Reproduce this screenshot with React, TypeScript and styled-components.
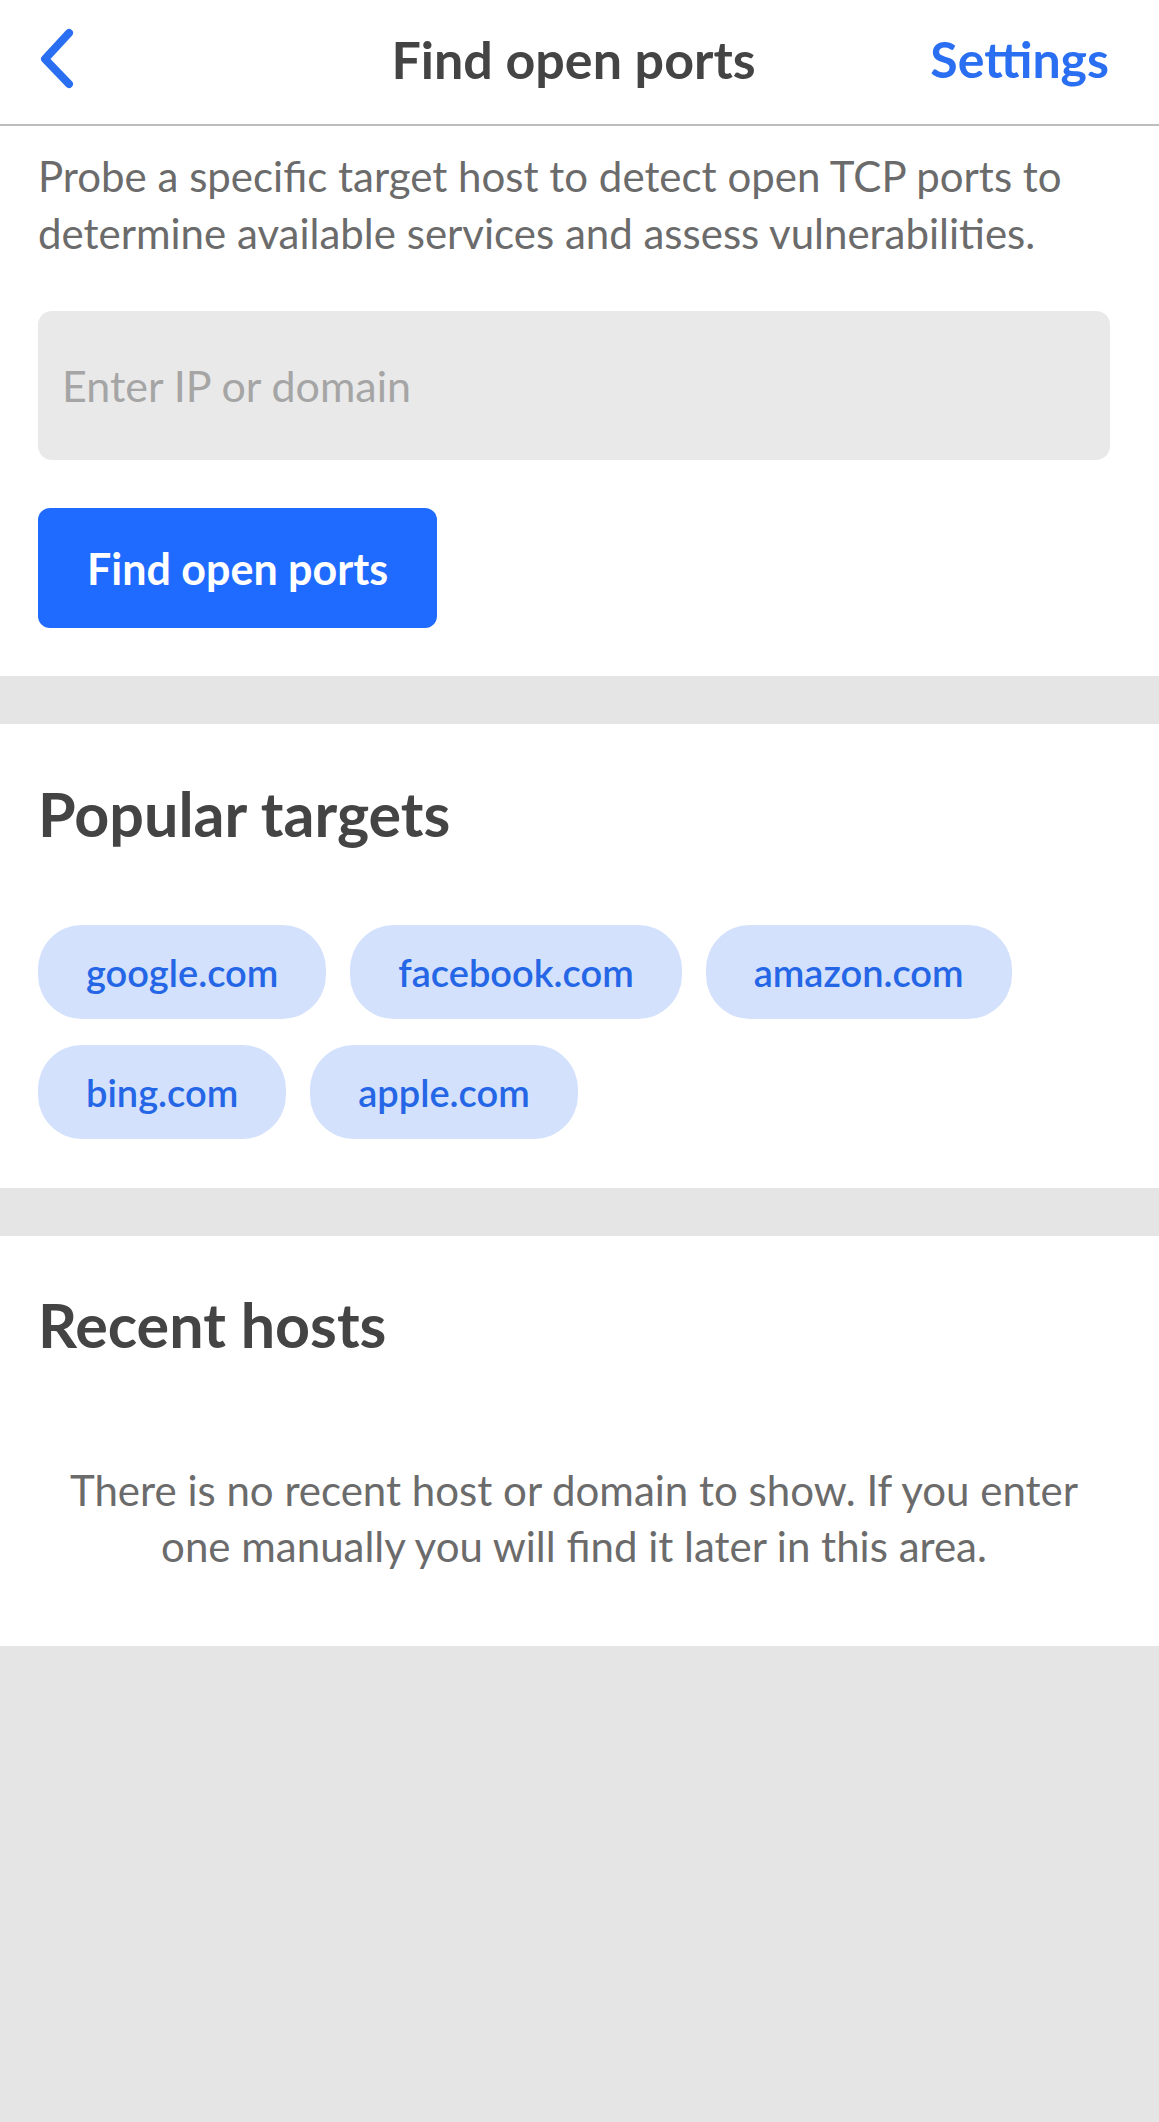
import React from "react";
import styled, { createGlobalStyle } from "styled-components";

const GlobalStyle = createGlobalStyle`
  html, body {
    margin: 0;
    padding: 0;
    background: #e5e5e5;
  }
  body {
    font-family: "Lato", "Open Sans", sans-serif;
    -webkit-font-smoothing: antialiased;
  }
  * { box-sizing: border-box; }
`;

const Page = styled.div`
  min-height: 2122px;
  background: #e5e5e5;
  display: flex;
  flex-direction: column;
  gap: 48px;
`;

const Header = styled.header`
  height: 126px;
  background: #ffffff;
  border-bottom: 2px solid #bdbdbd;
  display: grid;
  grid-template-columns: 1fr auto 1fr;
  align-items: center;
  padding: 0 50px 6px 38px;
`;

const BackButton = styled.button`
  justify-self: start;
  border: none;
  background: none;
  padding: 0;
  display: flex;
  cursor: pointer;
`;

const Title = styled.h1`
  margin: 0;
  font-size: 52px;
  font-weight: 700;
  color: #444444;
`;

const HeaderLink = styled.a`
  justify-self: end;
  font-size: 50px;
  font-weight: 700;
  color: #2a6ef2;
  text-decoration: none;
`;

const Section = styled.section<{ $top: number; $bottom: number }>`
  background: #ffffff;
  padding: ${(p) => p.$top}px 49px ${(p) => p.$bottom}px 38px;
  display: flex;
  flex-direction: column;
`;

const TopSection = styled.div`
  display: flex;
  flex-direction: column;
`;

const Intro = styled.div`
  background: #ffffff;
  padding: 22px 49px 48px 38px;
  display: flex;
  flex-direction: column;
`;

const Description = styled.p`
  margin: 0;
  font-size: 42px;
  line-height: 57px;
  color: #6b6b6b;
`;

const Input = styled.input`
  margin-top: 49px;
  height: 149px;
  width: 100%;
  border: none;
  border-radius: 14px;
  background: #e9e9e9;
  padding: 0 24px;
  font-family: "Lato", "Open Sans", sans-serif;
  font-size: 43px;
  color: #333;
  outline: none;
  &::placeholder {
    color: #a5a5a5;
  }
`;

const PrimaryButton = styled.button`
  margin-top: 48px;
  align-self: flex-start;
  height: 120px;
  padding: 0 49px;
  border: none;
  border-radius: 12px;
  background: #1f6bff;
  color: #ffffff;
  font-family: "Lato", "Open Sans", sans-serif;
  font-size: 43px;
  font-weight: 700;
  cursor: pointer;
`;

const SectionTitle = styled.h2`
  margin: 0;
  font-size: 61px;
  line-height: 72px;
  font-weight: 700;
  color: #444444;
`;

const ChipList = styled.div`
  margin-top: 75px;
  display: flex;
  flex-wrap: wrap;
  column-gap: 24px;
  row-gap: 26px;
`;

const Chip = styled.button`
  height: 94px;
  padding: 0 48px;
  border: none;
  border-radius: 44px;
  background: #d3e1fc;
  color: #2466e6;
  font-family: "Lato", "Open Sans", sans-serif;
  font-size: 38px;
  font-weight: 600;
  cursor: pointer;
`;

const EmptyText = styled.p`
  margin: 101px auto 0;
  max-width: 1040px;
  text-align: center;
  font-size: 42px;
  line-height: 56px;
  color: #6b6b6b;
`;

const targets = ["google.com", "facebook.com", "amazon.com", "bing.com", "apple.com"];

export default function App() {
  return (
    <>
      <GlobalStyle />
      <Page>
        <TopSection>
          <Header>
            <BackButton aria-label="Back">
              <svg width="40" height="64" viewBox="0 0 40 64" fill="none">
                <path
                  d="M31 6 L7 32 L31 57"
                  stroke="#2a6ef2"
                  strokeWidth="8"
                  strokeLinecap="round"
                  strokeLinejoin="round"
                />
              </svg>
            </BackButton>
            <Title>Find open ports</Title>
            <HeaderLink href="#">Settings</HeaderLink>
          </Header>
          <Intro>
            <Description>
              Probe a specific target host to detect open TCP ports to determine available
              services and assess vulnerabilities.
            </Description>
            <Input placeholder="Enter IP or domain" />
            <PrimaryButton>Find open ports</PrimaryButton>
          </Intro>
        </TopSection>
        <Section $top={54} $bottom={49}>
          <SectionTitle>Popular targets</SectionTitle>
          <ChipList>
            {targets.map((t) => (
              <Chip key={t}>{t}</Chip>
            ))}
          </ChipList>
        </Section>
        <Section $top={53} $bottom={72}>
          <SectionTitle>Recent hosts</SectionTitle>
          <EmptyText>
            There is no recent host or domain to show. If you enter one manually you will
            find it later in this area.
          </EmptyText>
        </Section>
      </Page>
    </>
  );
}
